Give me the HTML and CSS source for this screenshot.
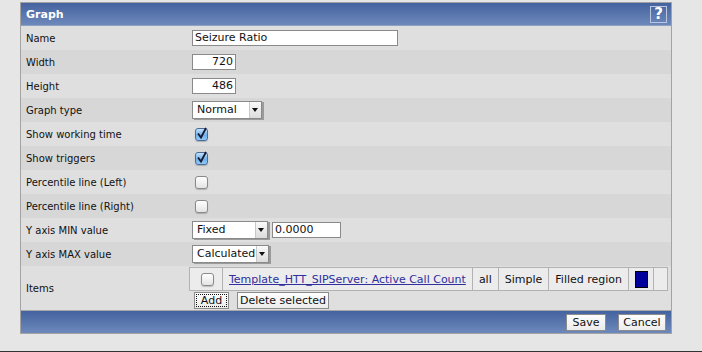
FILE: index.html
```html
<!DOCTYPE html>
<html lang="en">
<head>
<meta charset="UTF-8" />
<title>Graph</title>
<link rel="stylesheet" href="styles.css">
</head>
<body>

<div class="panel">
  <div class="panel-head">
    <span>Graph</span>
    <span class="help">?</span>
  </div>

  <div class="row">
    <div class="label">Name</div>
    <div class="value"><span class="text wide">Seizure Ratio</span></div>
  </div>
  <div class="row">
    <div class="label">Width</div>
    <div class="value"><span class="text num">720</span></div>
  </div>
  <div class="row">
    <div class="label">Height</div>
    <div class="value"><span class="text num">486</span></div>
  </div>
  <div class="row">
    <div class="label">Graph type</div>
    <div class="value"><span class="select s-normal">Normal<span class="arrow"></span></span></div>
  </div>
  <div class="row">
    <div class="label">Show working time</div>
    <div class="value"><span class="check on"><svg width="14" height="16" viewBox="0 0 14 16"><path d="M3 8.5 L6 12.5 L11 3" fill="none" stroke="#1a1a2a" stroke-width="1.8"/></svg></span></div>
  </div>
  <div class="row">
    <div class="label">Show triggers</div>
    <div class="value"><span class="check on"><svg width="14" height="16" viewBox="0 0 14 16"><path d="M3 8.5 L6 12.5 L11 3" fill="none" stroke="#1a1a2a" stroke-width="1.8"/></svg></span></div>
  </div>
  <div class="row">
    <div class="label">Percentile line (Left)</div>
    <div class="value"><span class="check"></span></div>
  </div>
  <div class="row">
    <div class="label">Percentile line (Right)</div>
    <div class="value"><span class="check"></span></div>
  </div>
  <div class="row">
    <div class="label">Y axis MIN value</div>
    <div class="value">
      <span class="select s-fixed">Fixed<span class="arrow"></span></span>
      <span class="text mid">0.0000</span>
    </div>
  </div>
  <div class="row">
    <div class="label">Y axis MAX value</div>
    <div class="value"><span class="select s-calc">Calculated<span class="arrow"></span></span></div>
  </div>
  <div class="row items">
    <div class="label">Items</div>
    <div class="value">
      <table class="item-list">
        <tr>
          <td class="c-check"><span class="check"></span></td>
          <td class="c-name"><a href="#">Template_HTT_SIPServer: Active Call Count</a></td>
          <td>all</td>
          <td>Simple</td>
          <td>Filled region</td>
          <td class="c-color"><span class="swatch"></span></td>
          <td class="c-empty"></td>
        </tr>
      </table>
      <div class="item-buttons">
        <button class="btn focus b-add">Add</button>
        <button class="btn b-del">Delete selected</button>
      </div>
    </div>
  </div>

  <div class="panel-foot">
    <button class="btn b-save">Save</button>
    <button class="btn b-cancel">Cancel</button>
  </div>
</div>

<div class="bottom-rule"></div>

</body>
</html>
```

FILE: styles.css
```css
body {
  margin: 0;
  background: #e6e6e6;
  font-family: "DejaVu Sans", Verdana, sans-serif;
  font-size: 10px;
  color: #111;
}

.panel {
  margin: 2px 30px 0 20px;
  border: 1px solid #a3a3a3;
  background: #dedede;
}

.panel-head {
  height: 22px;
  background: linear-gradient(#44629f, #6d89bb);
  color: #fff;
  font-weight: 700;
  font-size: 11px;
  display: flex;
  align-items: center;
  justify-content: space-between;
  padding: 0 4px 0 5px;
  border-bottom: 1px solid #8da0c4;
}

.help {
  width: 15px;
  height: 15px;
  border: 1px solid #b8c6e0;
  display: flex;
  align-items: center;
  justify-content: center;
  font-size: 15px;
  font-weight: 700;
  line-height: 1;
}

.row {
  display: grid;
  grid-template-columns: 171px 1fr;
  align-items: center;
  height: 24px;
}
.row:nth-of-type(odd) { background: #d7d7d7; }
.row:nth-of-type(even) { background: #dfdfdf; }

.label {
  padding-left: 5px;
}

.value {
  display: flex;
  align-items: center;
  gap: 4px;
}

.text {
  display: inline-block;
  height: 14px;
  line-height: 14px;
  background: #fff;
  border: 1px solid #8a8a8a;
  padding: 0 2px;
  font-size: 11px;
}
.text.wide { width: 200px; }
.text.num { width: 38px; text-align: right; }
.text.mid { width: 63px; }

.select {
  position: relative;
  display: inline-block;
  height: 16px;
  line-height: 16px;
  background: #fff;
  border: 1px solid #8a8a8a;
  box-shadow: 2px 1px 0 #9a9a9a;
  padding-left: 4px;
  font-size: 11px;
  box-sizing: content-box;
}
.s-normal { width: 64px; }
.s-fixed { width: 70px; }
.s-calc { width: 71px; }

.arrow {
  position: absolute;
  right: 0;
  top: 0;
  width: 11px;
  height: 16px;
  background: linear-gradient(#fafafa, #dcdcdc);
  border-left: 1px solid #c8c8c8;
}
.arrow::after {
  content: "";
  position: absolute;
  left: 2px;
  top: 6px;
  border-left: 3.5px solid transparent;
  border-right: 3.5px solid transparent;
  border-top: 4px solid #111;
}

.check {
  display: inline-block;
  position: relative;
  width: 11px;
  height: 11px;
  margin-left: 3px;
  border: 1px solid #8a8a8a;
  border-radius: 3px;
  background: linear-gradient(#ffffff, #e4e4e4);
  box-shadow: 0 1px 1px rgba(0, 0, 0, 0.2);
}
.check.on {
  border-color: #4a6c9c;
  background: linear-gradient(#c4e1fb, #6fb1ee 55%, #93c8f6);
}
.check svg {
  position: absolute;
  left: -1px;
  top: -4px;
}

.items {
  height: 44px;
}
.items .value {
  flex-direction: column;
  align-items: flex-start;
  gap: 1px;
}

.item-list {
  border-collapse: collapse;
  margin-left: -3px;
  background: #ececec;
  font-size: 11px;
}
.item-list td {
  border: 1px solid #b2b2b2;
  height: 22px;
  padding: 0 6px;
  white-space: nowrap;
}
.item-list .c-check { width: 32px; padding: 0; text-align: center; }
.item-list .c-check .check { margin: 0 0 0 2px; vertical-align: middle; }
.item-list .c-name { padding: 0 6px 0 6px; }
.item-list .c-color { padding: 0 5px 0 6px; }
.item-list .c-empty { width: 1px; padding: 0 6px; }

.item-list a {
  color: #2f2f9e;
}

.swatch {
  display: block;
  width: 11px;
  height: 15px;
  background: #00009a;
  border: 1px solid #000;
}

.item-buttons {
  display: flex;
  gap: 8px;
  margin-left: 2px;
}

.btn {
  font-family: "DejaVu Sans", Verdana, sans-serif;
  font-size: 11px;
  color: #111;
  height: 17px;
  padding: 0;
  background: linear-gradient(#fdfdfd, #ececec);
  border: 1px solid #8c8c8c;
  border-radius: 0;
}
.btn.focus {
  outline: 1px dotted #111;
  outline-offset: -3px;
}
.b-add { width: 35px; }
.b-del { width: 92px; }
.b-save { width: 40px; }
.b-cancel { width: 48px; }

.panel-foot {
  height: 22px;
  background: linear-gradient(#44629f, #6d89bb);
  display: flex;
  align-items: center;
  justify-content: flex-end;
  gap: 12px;
  padding-right: 5px;
  border-top: 1px solid #a8a8a8;
}

.bottom-rule {
  margin-top: 17px;
  border-top: 2px solid #333;
}
```
